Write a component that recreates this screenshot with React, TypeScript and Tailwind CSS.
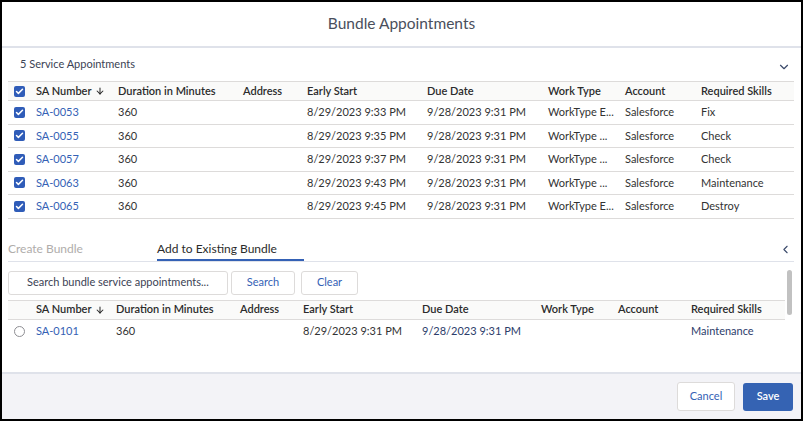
import React from 'react'
import { ChevronDown, ChevronLeft, ArrowDown, Check } from 'lucide-react'

const topCols = 'grid grid-cols-[28px_82px_125px_64px_120px_121px_77px_76px_1fr]'
const bottomCols = 'grid grid-cols-[28px_80px_124px_63px_119px_119px_77px_73px_1fr]'

const appointments = [
  { id: 'SA-0053', start: '8/29/2023 9:33 PM', work: 'WorkType E...', skill: 'Fix' },
  { id: 'SA-0055', start: '8/29/2023 9:35 PM', work: 'WorkType ...', skill: 'Check' },
  { id: 'SA-0057', start: '8/29/2023 9:37 PM', work: 'WorkType ...', skill: 'Check' },
  { id: 'SA-0063', start: '8/29/2023 9:43 PM', work: 'WorkType ...', skill: 'Maintenance' },
  { id: 'SA-0065', start: '8/29/2023 9:45 PM', work: 'WorkType E...', skill: 'Destroy' },
]

function Checkbox() {
  return (
    <span className="flex h-[11px] w-[11px] items-center justify-center rounded-[2px] bg-[#2f5cb8]">
      <Check className="h-[9px] w-[9px] text-white" strokeWidth={4} />
    </span>
  )
}

function HeaderCells({ cols, lead }: { cols: string; lead: React.ReactNode }) {
  return (
    <div className={`${cols} h-[20px] items-center border-y border-[#dddbda] bg-[#fafaf9] font-semibold text-[#2b2b2b]`}>
      <div className="pl-[6px]">{lead}</div>
      <div className="flex items-center gap-[3px]">
        SA Number <ArrowDown className="h-[10px] w-[10px]" strokeWidth={2.5} />
      </div>
      <div>Duration in Minutes</div>
      <div>Address</div>
      <div>Early Start</div>
      <div>Due Date</div>
      <div>Work Type</div>
      <div>Account</div>
      <div>Required Skills</div>
    </div>
  )
}

export default function App() {
  return (
    <div
      className="flex h-[421px] w-[803px] flex-col border-2 border-black bg-white text-[11px] text-[#333333]"
      style={{ fontFamily: 'Lato, "Noto Sans", sans-serif' }}
    >
      {/* Title */}
      <div className="flex h-[46px] items-center justify-center border-b-2 border-[#dfe2ea] text-[15.5px] text-[#4a4f5c]">
        Bundle Appointments
      </div>

      {/* Selected appointments */}
      <div className="flex h-[33px] items-center justify-between pl-[18px] pr-[10px] text-[#3b4254]">
        <span>5 Service Appointments</span>
        <ChevronDown className="mt-[4px] h-[14px] w-[14px] text-[#3b4a6b]" strokeWidth={2} />
      </div>
      <div className="ml-[6px] mr-[7px]">
        <HeaderCells cols={topCols} lead={<Checkbox />} />
        {appointments.map((a) => (
          <div key={a.id} className={`${topCols} h-[23.5px] items-center border-b border-[#dddbda]`}>
            <div className="pl-[6px]">
              <Checkbox />
            </div>
            <div className="text-[#3461b5]">{a.id}</div>
            <div>360</div>
            <div></div>
            <div>{a.start}</div>
            <div>9/28/2023 9:31 PM</div>
            <div>{a.work}</div>
            <div>Salesforce</div>
            <div>{a.skill}</div>
          </div>
        ))}
      </div>

      {/* Tabs */}
      <div className="ml-[6px] mr-[7px] mt-[22px] flex h-[21px] items-end justify-between border-b border-[#dfe2ea]">
        <div className="flex items-end">
          <div className="w-[149px] pb-[3px] text-[12px] text-[#b0adab]">Create Bundle</div>
          <div className="w-[147px] border-b-2 border-[#3461b5] pb-[1px] text-[12px] text-[#2b2b2b]">
            Add to Existing Bundle
          </div>
        </div>
        <ChevronLeft className="mb-[5px] mr-[2px] h-[13px] w-[13px] text-[#3b4a6b]" strokeWidth={2} />
      </div>

      {/* Search results */}
      <div className="ml-[6px] mr-[8px] mt-[6px] flex h-[77px] overflow-hidden">
        <div className="flex-1">
          <div className="flex h-[32px] items-start gap-[3px] pt-[3px]">
            <div className="flex h-[24px] w-[220px] items-center rounded-[3px] border border-[#dddbda] pl-[18px] text-[#3b4254]">
              Search bundle service appointments...
            </div>
            <div className="flex h-[24px] w-[64px] items-center justify-center rounded-[3px] border border-[#dddbda] text-[#3461b5]">
              Search
            </div>
            <div className="ml-[3px] flex h-[24px] w-[57px] items-center justify-center rounded-[3px] border border-[#dddbda] text-[#3461b5]">
              Clear
            </div>
          </div>
          <HeaderCells cols={bottomCols} lead={null} />
          <div className={`${bottomCols} h-[24px] items-center`}>
            <div className="pl-[6px]">
              <span className="block h-[11px] w-[11px] rounded-full border border-[#8e8e93]" />
            </div>
            <div className="text-[#3461b5]">SA-0101</div>
            <div>360</div>
            <div></div>
            <div>8/29/2023 9:31 PM</div>
            <div className="text-[#2d3d6b]">9/28/2023 9:31 PM</div>
            <div></div>
            <div></div>
            <div className="text-[#2d3d6b]">Maintenance</div>
          </div>
        </div>
        <div className="w-[8px] pt-[2px]">
          <div className="ml-[2px] h-[45px] w-[5px] rounded-full bg-[#c1c1c1]" />
        </div>
      </div>

      <div className="flex-1" />

      {/* Footer */}
      <div className="flex h-[47px] items-center justify-end gap-[8px] border-t-2 border-[#dfe2ea] bg-[#f3f3f7] pr-[8px]">
        <button className="h-[29px] w-[58px] rounded-[3px] border border-[#dddbda] bg-white text-[11px] text-[#3461b5]">
          Cancel
        </button>
        <button className="h-[28px] w-[50px] rounded-[3px] bg-[#3563b3] text-[11px] font-semibold text-white">
          Save
        </button>
      </div>
    </div>
  )
}
